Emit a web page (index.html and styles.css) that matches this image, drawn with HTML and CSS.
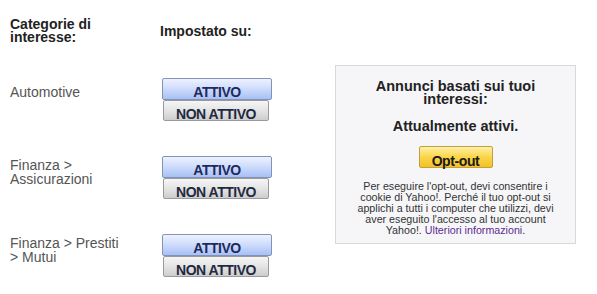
FILE: index.html
```html
<!DOCTYPE html>
<html lang="it">
	<head>
		<meta charset="UTF-8" />
		<meta name="viewport" content="width=device-width, initial-scale=1.0" />
		<title>Preferenze annunci</title>
		<link rel="stylesheet" href="styles.css">
	</head>
	<body>
		<div class="page">
			<div class="prefs">
				<div class="prefs-head">
					<div class="col-cat">Categorie di<br />interesse:</div>
					<div class="col-set">Impostato su:</div>
				</div>

				<div class="pref-row">
					<div class="cat single">Automotive</div>
					<div class="toggle">
						<button class="btn-on">ATTIVO</button>
						<button class="btn-off">NON ATTIVO</button>
					</div>
				</div>
				<div class="pref-row">
					<div class="cat">Finanza &gt;<br />Assicurazioni</div>
					<div class="toggle">
						<button class="btn-on">ATTIVO</button>
						<button class="btn-off">NON ATTIVO</button>
					</div>
				</div>
				<div class="pref-row">
					<div class="cat">Finanza &gt; Prestiti<br />&gt; Mutui</div>
					<div class="toggle">
						<button class="btn-on">ATTIVO</button>
						<button class="btn-off">NON ATTIVO</button>
					</div>
				</div>
			</div>

			<div class="ads-box">
				<h2>Annunci basati sui tuoi<br />interessi:</h2>
				<h3>Attualmente attivi.</h3>
				<button class="btn-optout">Opt-out</button>
				<p>
					Per eseguire l'opt-out, devi consentire i cookie di Yahoo!.
					Perché il tuo opt-out si applichi a tutti i computer che
					utilizzi, devi aver eseguito l'accesso al tuo account
					Yahoo!. <a href="#">Ulteriori informazioni</a>.
				</p>
			</div>
		</div>
	</body>
</html>
```

FILE: styles.css
```css
body {
	margin: 0;
	font-family: "Liberation Sans", Arial, sans-serif;
	background-color: white;
	color: #333;
}
.page {
	display: flex;
	align-items: flex-start;
	padding-left: 10px;
}
.prefs {
	width: 325px;
}
.prefs-head {
	display: flex;
	padding-top: 18px;
	font-size: 14px;
	line-height: 13px;
	font-weight: bold;
	color: #222;
}
.col-cat {
	width: 150px;
}
.col-set {
	padding-top: 7px;
}
.pref-row {
	display: flex;
	margin-top: 35px;
	height: 43px;
}
.pref-row:nth-child(2) {
	margin-top: 34px;
}
.cat {
	width: 152px;
	padding-top: 2px;
	font-size: 14px;
	line-height: 14px;
	color: #555;
}
.cat.single {
	padding-top: 7px;
}
.toggle {
	display: flex;
	flex-direction: column;
	align-items: flex-start;
}
button {
	font-family: "Liberation Sans", Arial, sans-serif;
	font-weight: bold;
	margin: 0;
	cursor: pointer;
	box-sizing: border-box;
}
.btn-on {
	width: 110px;
	height: 22px;
	padding: 6px 0 0;
	font-size: 14px;
	line-height: 14px;
	letter-spacing: -0.5px;
	color: #1c2a5c;
	border: 1px solid #8194b8;
	border-radius: 2px;
	background: linear-gradient(#eef2ff, #c9d8fb 55%, #a8c0f6);
}
.btn-off {
	width: 106px;
	height: 21px;
	margin-left: 1px;
	padding: 8px 0 0;
	font-size: 14px;
	line-height: 11px;
	letter-spacing: -0.5px;
	color: #1f2a3f;
	border: 1px solid #9a9a9a;
	border-radius: 2px;
	background: linear-gradient(#f6f6f6, #e2e2e2 55%, #cdcdcd);
}
.ads-box {
	width: 241px;
	height: 179px;
	margin-top: 65px;
	box-sizing: border-box;
	padding: 14px 16px 0;
	background-color: #f6f6f8;
	border: 1px solid #d9d9d9;
	text-align: center;
}
.ads-box h2 {
	margin: 0;
	font-size: 14.5px;
	line-height: 13px;
	color: #222;
}
.ads-box h3 {
	margin: 14px 0 0;
	font-size: 14.5px;
	line-height: 13px;
	color: #222;
}
.btn-optout {
	display: block;
	width: 74px;
	height: 22px;
	margin: 13px auto 0;
	padding: 7px 0 0;
	font-size: 14px;
	line-height: 14px;
	letter-spacing: -0.4px;
	color: #1a1a1a;
	border: 1px solid #bfa046;
	border-radius: 2px;
	background: linear-gradient(#fff0a6, #fbd548 50%, #f4c023);
}
.ads-box p {
	margin: 13px 0 0;
	font-size: 10.7px;
	line-height: 11px;
	color: #333;
}
.ads-box a {
	color: #5c2d91;
	text-decoration: none;
}
```
